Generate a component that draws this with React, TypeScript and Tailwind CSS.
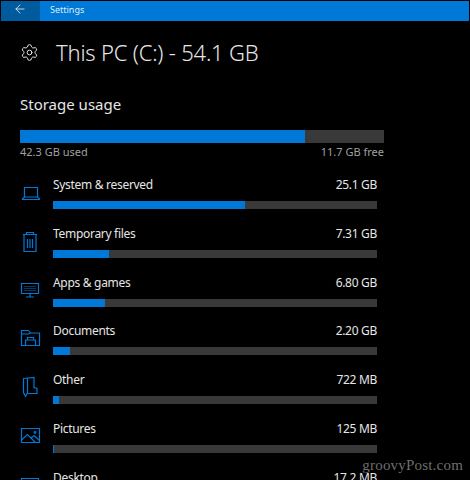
import { ArrowLeft, Settings } from 'lucide-react'
import type { ReactNode } from 'react'

const icons: Record<string, ReactNode> = {
  system: (
    <>
      <path d="M4.500 9.500h13v9.500h-13z" />
      <path d="M4.500 19 2.500 21v.5h17V21l-2-2" />
    </>
  ),
  temp: (
    <>
      <path d="M3 7.500h14M4 7.500v17h12v-17M6.500 7V5.500h7V7" />
      <path d="M7.500 12v9M10 12v9M12.500 12v9" />
    </>
  ),
  apps: (
    <>
      <path d="M1.500 7.500h17v10h-17zM10 17.500v3M6 21h8" />
      <path d="M4.500 10.500h11M4.500 12.500h11M4.500 14.500h11" strokeDasharray="1 1" />
    </>
  ),
  docs: (
    <>
      <path d="M1.500 21.500v-15h7l2 2.500h9v12.500z" />
      <path d="M1.500 10h7l2-1" />
      <path d="M5.500 21.500V16h10v5.500M7.500 16v-2.500h6V16" />
    </>
  ),
  other: (
    <>
      <path d="M3.500 5.500 14 4.500v10l3 1v5H7l-1.500 3-2-4z" />
      <path d="M7.500 5v15.500" />
    </>
  ),
  pictures: (
    <>
      <path d="M1.500 6.500h18v14h-18z" />
      <path d="m1.500 18 6-5.500 8 8M11 16l3-2.500 5.500 5" />
      <circle cx="15" cy="10.500" r=".8" />
    </>
  ),
  desktop: <path d="M1.500 7.500h17v10h-17zM10 17.500v3M6 21h8" />,
}

const rows = [
  { id: 'system', label: 'System & reserved', size: '25.1 GB', used: 'w-[192px]' },
  { id: 'temp', label: 'Temporary files', size: '7.31 GB', used: 'w-[56px]' },
  { id: 'apps', label: 'Apps & games', size: '6.80 GB', used: 'w-[52px]' },
  { id: 'docs', label: 'Documents', size: '2.20 GB', used: 'w-[17px]' },
  { id: 'other', label: 'Other', size: '722 MB', used: 'w-[6px]' },
  { id: 'pictures', label: 'Pictures', size: '125 MB', used: 'w-[1px]' },
  { id: 'desktop', label: 'Desktop', size: '17.2 MB', used: 'w-0' },
]

function Row({ id, label, size, used }: { id: string; label: string; size: string; used: string }) {
  return (
    <div className="flex h-[48.8px] shrink-0">
      <div className="w-[33px] shrink-0 pt-[4px]">
        <svg width="26" height="26" viewBox="0 0 26 26" fill="none" stroke="#0078d7" strokeWidth="1.200">
          {icons[id]}
        </svg>
      </div>
      <div className="w-[324px]">
        <div className="flex h-[22px] items-center justify-between text-[12px] tracking-[-0.3px] text-[#e6e6e6]">
          <span>{label}</span>
          <span>{size}</span>
        </div>
        <div className="mt-[5px] h-2 bg-[#393939]">
          <div className={`h-full bg-[#0078d7] ${used}`} />
        </div>
      </div>
    </div>
  )
}

export default function App() {
  return (
    <div className="relative h-[480px] w-[470px] overflow-hidden bg-black pt-px font-['Noto_Sans','Open_Sans',sans-serif]">
      {/* Title bar */}
      <div className="mx-px flex h-5 items-center bg-[#0078d7] text-white">
        <div className="flex h-full w-[39px] items-center justify-center bg-[#005a9e] pb-[5px] pr-[1px]">
          <ArrowLeft size={14} strokeWidth={1.25} />
        </div>
        <span className="ml-[10px] pb-[2px] text-[9px] text-[#dcecf8]">Settings</span>
      </div>

      {/* Heading */}
      <div className="mt-[19px] flex h-[24px] items-center pl-[20px] text-[#e6e6e6]">
        <Settings size={19} strokeWidth={1.25} />
        <h1 className="ml-[17px] text-[22px] font-light tracking-[-0.2px]">This PC (C:) - 54.1 GB</h1>
      </div>

      {/* Storage usage */}
      <div className="mt-[30px] pl-[20px]">
        <h2 className="h-[20px] text-[15px] leading-[20px] text-[#e6e6e6]">Storage usage</h2>
        <div className="mt-[16px] h-[13px] w-[364px] bg-[#393939]">
          <div className="h-full w-[285px] bg-[#0078d7]" />
        </div>
        <div className="mt-[1px] flex h-[16px] w-[364px] justify-between text-[11px] text-[#a0a0a0]">
          <span>42.3 GB used</span>
          <span>11.7 GB free</span>
        </div>
      </div>

      {/* Category list */}
      <div className="mt-[14px] flex flex-col pl-[20px]">
        {rows.map(r => (
          <Row key={r.id} {...r} />
        ))}
      </div>

      <span className="absolute bottom-[4px] right-[7px] font-['Liberation_Serif',serif] text-[15px] tracking-[0.2px] text-[#6e6e6e]">
        groovyPost.com
      </span>
    </div>
  )
}
